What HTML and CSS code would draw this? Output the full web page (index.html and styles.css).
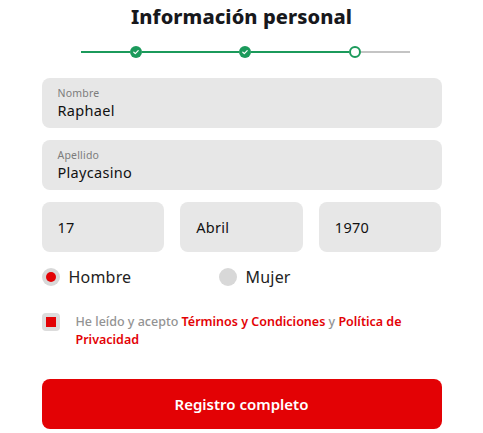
FILE: index.html
```html
<!DOCTYPE html>
<html lang="es">
<head>
<meta charset="utf-8">
<link rel="stylesheet" href="styles.css">
</head>
<body>
<div class="form">
  <h1 class="title">Información personal</h1>
  <div class="stepper">
    <span class="seg done first"></span>
    <span class="dot check"><svg viewBox="0 0 12 12" width="12" height="12"><path d="M3.8 6.2 L5.3 7.6 L8.2 4.6" fill="none" stroke="#fff" stroke-width="1.2" stroke-linecap="round" stroke-linejoin="round"/></svg></span>
    <span class="seg done"></span>
    <span class="dot check"><svg viewBox="0 0 12 12" width="12" height="12"><path d="M3.8 6.2 L5.3 7.6 L8.2 4.6" fill="none" stroke="#fff" stroke-width="1.2" stroke-linecap="round" stroke-linejoin="round"/></svg></span>
    <span class="seg done"></span>
    <span class="dot current"></span>
    <span class="seg todo last"></span>
  </div>
  <div class="field first-field">
    <span class="label">Nombre</span>
    <span class="value">Raphael</span>
  </div>
  <div class="field">
    <span class="label">Apellido</span>
    <span class="value">Playcasino</span>
  </div>
  <div class="date-row">
    <div class="field"><span class="value">17</span></div>
    <div class="field"><span class="value">Abril</span></div>
    <div class="field"><span class="value">1970</span></div>
  </div>
  <div class="gender">
    <label class="radio"><span class="radio-circle on"></span><span>Hombre</span></label>
    <label class="radio"><span class="radio-circle"></span><span>Mujer</span></label>
  </div>
  <div class="terms">
    <span class="checkbox"><span class="checkbox-fill"></span></span>
    <p class="terms-text">He leído y acepto <span class="link">Términos y Condiciones</span> y <span class="link">Política de Privacidad</span></p>
  </div>
  <button class="submit">Registro completo</button>
</div>
</body>
</html>
```
FILE: styles.css
```css
* { box-sizing: border-box; }
body {
  margin: 0;
  background: #fff;
  font-family: "Noto Sans", "Open Sans", sans-serif;
  color: #111;
}
.form {
  width: 400px;
  margin: 0 auto;
  padding-top: 3px;
  display: flex;
  flex-direction: column;
}
.title {
  margin: 0;
  text-align: center;
  font-size: 20px;
  font-weight: 800;
  line-height: 28px;
  color: #17181c;
  letter-spacing: 0.1px;
}
.stepper {
  display: flex;
  align-items: center;
  margin: 15px 0 0 39px;
  width: 329px;
  height: 12px;
}
.seg {
  height: 2px;
  flex: 1;
}
.seg.done { background: #1b9a5b; }
.seg.todo { background: #c4c4c4; }
.seg.first, .seg.last { flex: 0 0 49px; }
.dot {
  width: 12px;
  height: 12px;
  border-radius: 50%;
  flex: none;
  display: flex;
  align-items: center;
  justify-content: center;
}
.dot.check { background: #1b9a5b; }
.dot.current { border: 2px solid #1b9a5b; background: #fff; }
.field {
  margin-top: 12px;
  height: 50px;
  background: #e7e7e7;
  border-radius: 8px;
  padding: 8px 16px;
  display: flex;
  flex-direction: column;
  justify-content: center;
}
.field.first-field { margin-top: 20px; }
.label {
  font-size: 10.5px;
  color: #7c7c7c;
  line-height: 14px;
  letter-spacing: 0.2px;
}
.value {
  font-size: 14.5px;
  line-height: 20px;
  color: #111;
  letter-spacing: 0.3px;
}
.date-row {
  display: grid;
  grid-template-columns: repeat(3, 1fr);
  gap: 16px;
  margin-top: 12px;
}
.date-row .field { margin-top: 0; }
.gender {
  display: flex;
  margin-top: 14px;
  height: 22px;
  align-items: center;
}
.radio {
  display: flex;
  align-items: center;
  gap: 9px;
  font-size: 16px;
  color: #222;
  width: 177px;
  letter-spacing: 0.2px;
}
.radio-circle {
  width: 18px;
  height: 18px;
  border-radius: 50%;
  background: #d8d8d8;
  display: flex;
  align-items: center;
  justify-content: center;
}
.radio-circle.on::after {
  content: "";
  width: 10px;
  height: 10px;
  border-radius: 50%;
  background: #e30205;
}
.terms {
  display: flex;
  gap: 16px;
  margin-top: 25px;
}
.checkbox {
  flex: none;
  width: 18px;
  height: 18px;
  border-radius: 4px;
  background: #dcdcdc;
  display: flex;
  align-items: center;
  justify-content: center;
}
.checkbox-fill {
  width: 10px;
  height: 10px;
  background: #e30205;
}
.terms-text {
  margin: 0;
  font-size: 12.5px;
  line-height: 18px;
  color: #939393;
  font-weight: 500;
}
.link {
  color: #e30205;
  font-weight: 600;
}
.submit {
  margin-top: 30px;
  height: 50px;
  border: 0;
  border-radius: 8px;
  background: #e30205;
  color: #fff;
  font-family: inherit;
  font-size: 15px;
  font-weight: 600;
}
```
